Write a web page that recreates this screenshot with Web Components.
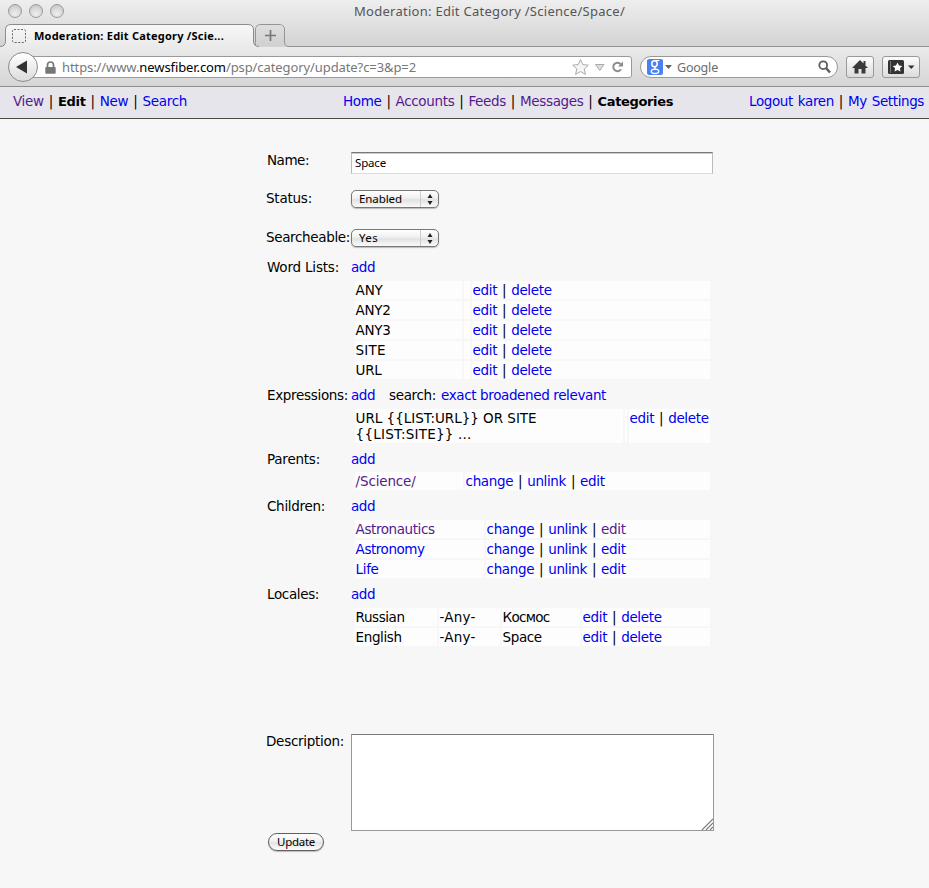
<!DOCTYPE html>
<html lang="en"><head><meta charset="utf-8"><title>Moderation: Edit Category /Science/Space/</title>
<style>
html,body{margin:0;height:888px;overflow:hidden;background:#f7f7f7}
body{font:13.500px/16px "DejaVu Sans",sans-serif;color:#000;display:flex;flex-direction:column}
</style></head><body>
<browser-chrome></browser-chrome>
<site-nav></site-nav>
<category-form></category-form>
<script>
const define=(name,html,extra)=>{
  const t=document.createElement('template');t.innerHTML=html;
  customElements.define(name,class extends HTMLElement{
    connectedCallback(){
      if(this.shadowRoot)return;
      this.attachShadow({mode:'open'}).append(t.content.cloneNode(true));
      if(extra)extra(this,this.shadowRoot);
    }
  });
};

define('ui-link','<style>:host{color:#00e;cursor:pointer}:host([visited]){color:#551a8b}</style><slot></slot>');

define('window-title',`<style>
:host{display:flex;height:24px;align-items:center;box-sizing:border-box;padding-bottom:2px}
.lights{display:flex;gap:7px;padding-left:8px;width:354px;box-sizing:border-box}
i{width:14px;height:14px;box-sizing:border-box;border-radius:50%;border:1px solid #999;background:radial-gradient(circle at 50% 75%,#eee,#dadada 50%,#bcbcbc)}
.t{font:13px/16px "Noto Sans",sans-serif;color:#555}
</style><div class="lights"><i></i><i></i><i></i></div><fit-text class="t" w="271">Moderation: Edit Category /Science/Space/</fit-text>`);

define('tab-strip',`<style>
:host{display:flex;height:23px;position:relative}
svg.bg{position:absolute;left:0;top:0}
.tab,.plus{position:relative;display:flex;align-items:center}
.tab{width:255px;padding-left:12px;box-sizing:border-box;gap:8px}
.t{font:bold 11px/16px "Noto Sans",sans-serif;color:#000}
.plus{width:30px;justify-content:center}
</style>
<svg class="bg" width="929" height="23" viewBox="0 0 929 23">
<defs><linearGradient id="g" x2="0" y2="1"><stop stop-color="#f8f8f8"/><stop offset="1" stop-color="#eaeaea"/></linearGradient><linearGradient id="h" x2="0" y2="1"><stop stop-color="#dedede"/><stop offset="1" stop-color="#d0d0d0"/></linearGradient></defs>
<path d="M254 22.5C256 22 255.500 19 255.500 17V6Q255.500 .5 261 .5H279Q284.500 .5 284.500 6V18Q284.500 22.500 289 22.500H929" fill="none" stroke="#939393"/>
<path d="M256 6Q256 1 261 1H279Q284 1 284 6V22H256Z" fill="url(#h)"/>
<path d="M0 22.500Q5.500 22.500 5.500 17V6Q5.500 .5 11 .5H248Q253.500 .5 253.500 6V17Q253.500 22.500 259 22.500V24H0Z" fill="url(#g)"/>
<path d="M0 22.500Q5.500 22.500 5.500 17V6Q5.500 .5 11 .5H248Q253.500 .5 253.500 6V17Q253.500 22.500 259 22.500" fill="none" stroke="#8c8c8c"/></svg>
<div class="tab"><svg width="14" height="14"><rect x=".5" y=".5" width="13" height="13" rx="1.500" fill="none" stroke="#666" stroke-dasharray="2 1.500"/></svg><fit-text class="t" w="190">Moderation: Edit Category /Scie...</fit-text></div>
<div class="plus"><svg width="11" height="11"><path d="M5.500 0V11M0 5.500H11" stroke="#777" stroke-width="1.700"/></svg></div>`);

define('url-bar',`<style>
:host{display:flex;align-items:center;width:624px;height:30px}
.back{width:30px;height:30px;box-sizing:border-box;border:1px solid #8b8b8b;border-radius:50%;background:linear-gradient(#fff,#dcdcdc);display:flex;align-items:center;justify-content:center;z-index:1;flex:none}
.field{margin-left:-10px;flex:1;height:22px;box-sizing:border-box;border:1px solid #999;border-radius:0 3px 3px 0;background:#fff;display:flex;align-items:center;padding-left:16px}
.u{font:13px/18px "Noto Sans",sans-serif;color:#777;margin:0 0 1px 6px}b{font-weight:400;color:#000}
.icons{margin-left:auto;margin-right:7px;display:flex;align-items:center}
</style><div class="back"><svg width="14" height="14"><path d="M0 7L11 .5V13.500Z" fill="#333"/></svg></div>
<div class="field"><svg width="11" height="13"><path d="M2.500 7V4a3 3 0 0 1 6 0V7" fill="none" stroke="#777" stroke-width="1.700"/><rect x=".3" y="6" width="10.400" height="6.700" rx="1" fill="#777"/></svg>
<fit-text class="u" w="354">https://www.<b>newsfiber.com</b>/psp/category/update?c=3&amp;p=2</fit-text>
<div class="icons"><svg width="52" height="18" viewBox="0 0 52 18"><path d="M8.500 1.500L10.800 6.600L16.300 7.200L12.200 10.900L13.400 16.400L8.500 13.600L3.600 16.400L4.800 10.900L.7 7.200L6.200 6.600Z" fill="#f5f5f5" stroke="#aaa"/><path d="M23.500 6.500H32L27.750 12.500Z" fill="#ddd" stroke="#aaa"/><path d="M48.700 6.300A4.200 4.200 0 1 0 49 11.300" fill="none" stroke="#8b8b8b" stroke-width="2"/><path d="M51 3.500V8.500H46Z" fill="#8b8b8b"/></svg></div></div>`);

define('search-box',`<style>
:host{display:flex;align-items:center;box-sizing:border-box;width:198px;height:22px;border:1px solid #999;border-radius:11px;background:#fff;padding:0 6px 0 6px}
.g{width:16px;height:16px;border-radius:2px;background:#4a80f5;display:flex;justify-content:center}
.t{font:12.500px/18px "Noto Sans",sans-serif;color:#6c6c6c;margin:1px 0 0 5px}
svg.m{margin-left:auto}
</style><div class="g"><svg width="12" height="16" fill="none" stroke="#fff"><ellipse cx="5.500" cy="4.800" rx="2.700" ry="3" stroke-width="1.500"/><path d="M6.500 1.500H10.500" stroke-width="1.100"/><path d="M7 7.500Q4.500 9 7 10.200" stroke-width="1.300"/><ellipse cx="6" cy="12.300" rx="3.700" ry="2.200" stroke-width="1.400"/></svg></div>
<svg width="9" height="6"><path d="M2 1H9L5.500 5Z" fill="#666"/></svg><fit-text class="t" w="41">Google</fit-text>
<svg class="m" width="13" height="14" fill="none" stroke="#5c5c5c"><circle cx="5.200" cy="5.200" r="3.900" stroke-width="1.800"/><path d="M8 8L12 12.500" stroke-width="2.500"/></svg>`);

define('tool-button',`<style>:host{display:flex;align-items:center;justify-content:center;box-sizing:border-box;height:22px;width:28px;border:1px solid #999;border-radius:3px;background:linear-gradient(#fcfcfc,#dcdcdc)}:host([wide]){width:38px}</style><slot></slot>`);

define('browser-chrome',`<style>
:host{display:block;height:87px;box-sizing:border-box;border-bottom:1px solid #8e8e8e;background:linear-gradient(#eee,#d3d3d3 47px,#eaeaea 47px,#d6d6d6 86px)}
.bar{display:flex;align-items:center;height:39px;padding:1px 0 0 8px;box-sizing:border-box}
search-box{margin-left:8px}.h{margin-left:8px}.b{margin-left:8px}
</style><window-title></window-title><tab-strip></tab-strip>
<div class="bar"><url-bar></url-bar><search-box></search-box>
<tool-button class="h"><svg width="16" height="14"><path d="M8 0L16 8H13.500V13.500H9.500V9H6.500V13.500H2.500V8H0ZM11.500 1H13.500V5H11.500Z" fill="#3a3a3a"/></svg></tool-button>
<tool-button class="b" wide><svg width="27" height="14"><rect width="16" height="14" rx="1.500" fill="#333"/><path d="M2.500 1V13" stroke="#777"/><path d="M9.500 2.500L11 5.500L14.300 6L11.900 8.300L12.500 11.600L9.500 10L6.500 11.600L7.100 8.300L4.700 6L8 5.500Z" fill="#fff"/><path d="M20 5.500H26.500L23.250 9Z" fill="#333"/></svg></tool-button></div>`);

define('site-nav',`<style>
:host{display:flex;height:32px;box-sizing:border-box;background:#e6e5eb;border-bottom:1px solid #4b4b46;padding:6px 0 0 13px;word-spacing:1px}
.c{margin-left:156px}.r{margin-left:76px}b{font-size:13px}
</style><fit-text w="174"><ui-link visited>View</ui-link> | <b>Edit</b> | <ui-link>New</ui-link> | <ui-link>Search</ui-link></fit-text>
<fit-text class="c" w="330"><ui-link>Home</ui-link> | <ui-link visited>Accounts</ui-link> | <ui-link visited>Feeds</ui-link> | <ui-link visited>Messages</ui-link> | <b>Categories</b></fit-text>
<fit-text class="r" w="175"><ui-link>Logout karen</ui-link> | <ui-link>My Settings</ui-link></fit-text>`);

define('form-row',`<style>
:host{display:grid;grid-template-columns:84px 363px;align-items:start}
.l{white-space:nowrap}
</style><div class="l"><slot name="label"></slot></div><div><slot></slot></div>`);

define('data-table',`<style>
:host{display:grid;gap:2px;width:355px;margin:4px 0 0 88px;grid-template-columns:var(--cols);grid-auto-rows:minmax(18px,auto);line-height:18px}
::slotted(*){background:#fdfdfd;padding-left:.6px;min-width:0;height:18px}
</style><slot></slot>`);

define('mac-select',`<style>
:host{display:flex;align-items:center;box-sizing:border-box;width:88px;height:18px;border:1px solid #777;border-radius:5px;background:linear-gradient(#fff,#f0f0f0 45%,#e2e2e2 55%,#fafafa);box-shadow:0 1px 1px #bbb;padding-left:7px;font:11.500px/16px "Noto Sans",sans-serif}
.a{margin-left:auto;width:17px;height:16px;border-left:1px solid #ccc;display:flex;align-items:center;justify-content:center}
</style><slot></slot><span class="a"><svg width="6" height="11"><path d="M3 0L5.500 4H.5ZM3 11L5.500 7H.5Z" fill="#222"/></svg></span>`);

define('name-field',`<style>:host{display:block;box-sizing:border-box;width:362px;height:22px;border:1px solid #bbb;border-top:1px solid #777;border-bottom-color:#ddd;background:#fff;box-shadow:inset 0 1px #ccc;padding:1px 3px;font:11.500px/17px "Noto Sans",sans-serif}</style><slot></slot>`);

define('text-area',`<style>:host{display:flex;align-items:flex-end;justify-content:flex-end;box-sizing:border-box;width:363px;height:97px;border:1px solid #999;border-top-color:#777;background:#fff}</style><svg width="12" height="12"><path d="M1 12L12 1M5 12L12 5M9 12L12 9" stroke="#777" stroke-width="1.100"/></svg>`);

define('mac-button',`<style>:host{display:flex;align-items:center;justify-content:center;box-sizing:border-box;width:56px;height:18px;border:1px solid #5f5f5f;border-radius:9px;background:linear-gradient(#fff,#f1f1f1 45%,#e4e4e4 55%,#fcfcfc);box-shadow:0 1px 1px #bbb;font:11.500px/16px "Noto Sans",sans-serif}</style><slot></slot>`);

const ed='<ui-link>edit</ui-link> | <ui-link>delete</ui-link>';
const cu=v=>`<ui-link>change</ui-link> | <ui-link>unlink</ui-link> | <ui-link${v?' visited':''}>edit</ui-link>`;
const cell=(html,w)=>`<div>${w?`<fit-text w="${w}">${html}</fit-text>`:html}</div>`;
const lab=(s,w)=>`<fit-text slot="label" w="${w}">${s}</fit-text>`;
define('category-form',`<style>
:host{display:block;padding-left:267px;flex:1}
form-row{height:18px}
.sec{margin-top:8px}
.pad{display:block;margin-left:-1px}
data-table>div{white-space:nowrap}
data-table>div:not(.x){word-spacing:1px}
.line{display:flex}
</style>
<form-row style="padding-top:33px;height:22px">${lab('Name:',42)}<name-field><fit-text w="31">Space</fit-text></name-field></form-row>
<form-row style="margin-top:16px">${lab('<span class="pad">Status:</span>',45)}<mac-select><fit-text w="43">Enabled</fit-text></mac-select></form-row>
<form-row style="margin-top:21px">${lab('<span class="pad">Searcheable:</span>',83)}<mac-select><fit-text w="19">Yes</fit-text></mac-select></form-row>
<form-row style="margin-top:12px">${lab('Word Lists:',72)}<ui-link><fit-text w="24">add</fit-text></ui-link></form-row>
<data-table style="--cols:107px 6px 1fr">${['ANY','ANY2','ANY3','SITE','URL'].map((n,i)=>cell(n,[27,35,35,30,26][i])+'<div></div>'+cell(ed,79)).join('')}</data-table>
<form-row class="sec">${lab('Expressions:',81)}<div class="line"><ui-link><fit-text w="24">add</fit-text></ui-link><fit-text w="47" style="margin-left:14px">search:</fit-text><ui-link style="margin-left:5px"><fit-text w="165">exact broadened relevant</fit-text></ui-link></div></form-row>
<data-table style="--cols:268px 2px 1fr;line-height:16px"><div class="x" style="height:33px;padding-top:1px"><fit-text w="181">URL {{LIST:URL}} OR SITE</fit-text><br><fit-text w="116">{{LIST:SITE}} ...</fit-text></div><div style="height:34px"></div><div style="height:33px;padding-top:1px">${'<fit-text w="79">'+ed+'</fit-text>'}</div></data-table>
<form-row class="sec">${lab('Parents:',53)}<ui-link><fit-text w="24">add</fit-text></ui-link></form-row>
<data-table style="--cols:108px 1fr;margin-top:3px">${cell('<ui-link visited>/Science/</ui-link>',60)+cell(cu(),139)}</data-table>
<form-row class="sec">${lab('Children:',58)}<ui-link><fit-text w="24">add</fit-text></ui-link></form-row>
<data-table style="--cols:129px 1fr">${cell('<ui-link visited>Astronautics</ui-link>',79)+cell(cu(1),139)+cell('<ui-link>Astronomy</ui-link>',69)+cell(cu(),139)+cell('<ui-link>Life</ui-link>',23)+cell(cu(),139)}</data-table>
<form-row class="sec">${lab('Locales:',52)}<ui-link><fit-text w="24">add</fit-text></ui-link></form-row>
<data-table style="--cols:82px 61px 78px 1fr">${cell('Russian',49)+cell('-Any-',36)+cell('Космос',47)+cell(ed,79)+cell('English',46)+cell('-Any-',36)+cell('Space',39)+cell(ed,79)}</data-table>
<form-row style="margin-top:88px;height:97px">${lab('<span class="pad" style="line-height:14px">Description:</span>',77)}<text-area></text-area></form-row>
<mac-button style="margin:2px 0 0 1px"><fit-text w="38">Update</fit-text></mac-button>`);

/* Spreads its text over the width given in "w" by adjusting the tracking. */
define('fit-text','<style>:host{display:inline-block;white-space:nowrap;vertical-align:top}</style><slot></slot>',el=>{
  const w=+el.getAttribute('w'),n=el.textContent.length;
  el.style.letterSpacing=((w-el.getBoundingClientRect().width)/n)+'px';
});
</script></body></html>
